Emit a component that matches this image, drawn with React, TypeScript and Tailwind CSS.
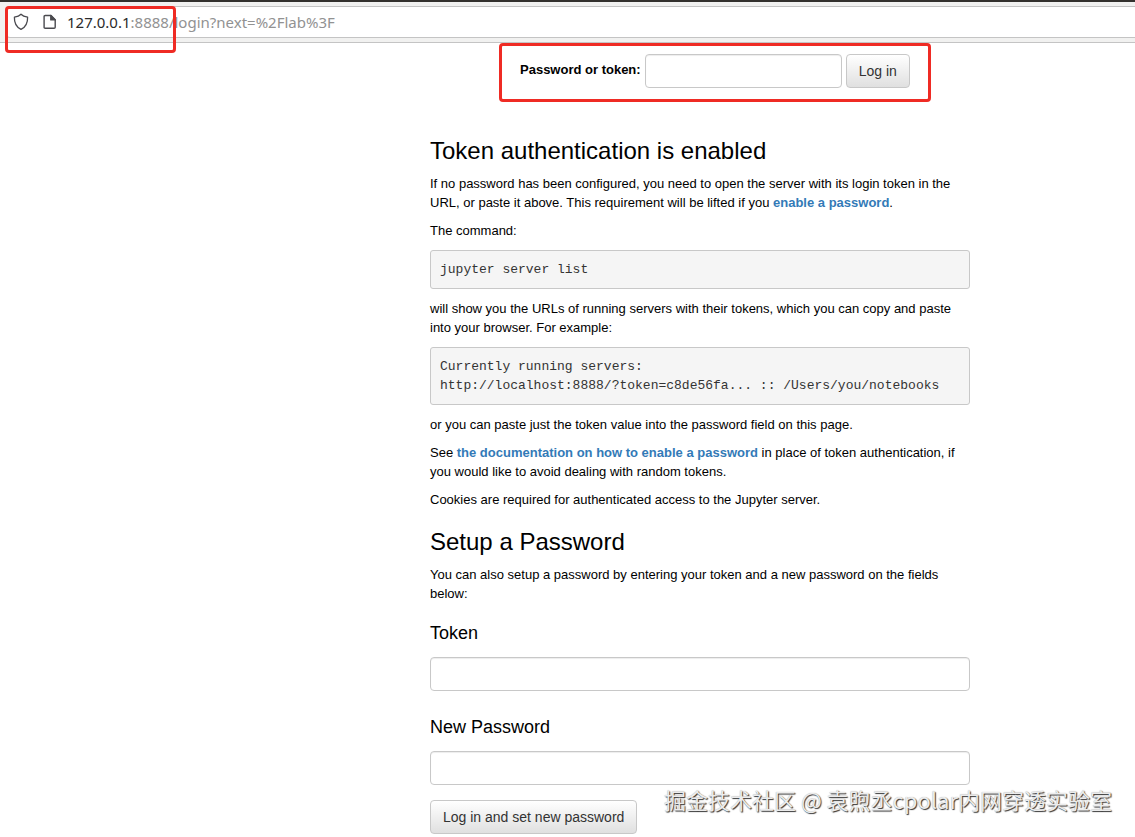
import { type ReactNode } from 'react'

const textInputClass =
  'h-[34px] rounded-[4px] border border-[#c8c8c8] bg-white px-3 text-[13px] shadow-[inset_0_1px_1px_rgba(0,0,0,0.075)] outline-none'
const buttonClass =
  'h-[34px] cursor-pointer rounded-[4px] border border-[#c8c8c8] bg-linear-to-b from-white to-[#e0e0e0] px-3 text-[14px] leading-5 text-[#333]'
const linkClass = 'font-bold text-[#337ab7] hover:underline'
const markerClass =
  'pointer-events-none absolute rounded-[4px] border-[3px] border-[#ef2b24]'

function ShieldIcon() {
  return (
    <svg width="16" height="18" viewBox="0 0 16 18" fill="none" stroke="#4a4a4f" strokeWidth="1.3" strokeLinejoin="round" aria-hidden="true">
      <path d="M8 1.2C6.6 2.6 4.3 3.6 1.4 4.2C1.2 9.8 3.2 14 8 16.4C12.8 14 14.8 9.8 14.6 4.2C11.7 3.6 9.4 2.6 8 1.2Z" />
    </svg>
  )
}

function PageIcon() {
  return (
    <svg width="14" height="16" viewBox="0 0 14 16" fill="none" stroke="#4a4a4f" strokeWidth="1.4" strokeLinejoin="round" aria-hidden="true">
      <path d="M2.2 1.5H8L12.2 5.7V13.2C12.2 13.9 11.8 14.3 11.1 14.3H2.2C1.5 14.3 1.1 13.9 1.1 13.2V2.6C1.1 1.9 1.5 1.5 2.2 1.5Z" />
      <path d="M7.8 1.5V5.9H12.2Z" fill="#4a4a4f" />
    </svg>
  )
}

function AddressBar() {
  return (
    <header className="border-t-2 border-b border-t-[#33312e] border-b-[#c4c4c4] bg-[#f1f1f0] pt-1 pb-1 pl-[6px]">
      <div className="flex h-8 items-center rounded-l-[4px] border border-r-0 border-[#c4c4c4] bg-white pl-[6px]">
        <ShieldIcon />
        <span className="ml-[14px]">
          <PageIcon />
        </span>
        <span className="ml-[10px] font-['Noto_Sans',sans-serif] text-[15px] leading-5 text-[#929292]">
          <span className="text-[#2b2b2b]">127.0.0.1</span>:8888/login?next=%2Flab%3F
        </span>
      </div>
    </header>
  )
}

function CodeBlock({ children }: { children: ReactNode }) {
  return (
    <pre className="my-[10px] rounded-[3px] border border-[#c8c8c8] bg-[#f5f5f5] px-[9px] py-[9px] font-['Liberation_Mono',monospace] text-[13px] leading-[19px] text-[#333]">
      {children}
    </pre>
  )
}

function LoginForm() {
  return (
    <form className="ml-[90px] flex gap-1 pt-[11px]" onSubmit={(e) => e.preventDefault()}>
      <label htmlFor="password_input" className="pt-[6px] font-bold whitespace-nowrap">
        Password or token:
      </label>
      <input id="password_input" type="password" className={`${textInputClass} w-[197px]`} />
      <button type="submit" className={buttonClass}>
        Log in
      </button>
    </form>
  )
}

function SetupForm() {
  return (
    <form className="flex flex-col items-start" onSubmit={(e) => e.preventDefault()}>
      <label htmlFor="token_input" className="mt-5 text-[18px] leading-5">
        Token
      </label>
      <input id="token_input" type="password" className={`${textInputClass} mt-[14px] w-full`} />
      <label htmlFor="new_password_input" className="mt-[26px] text-[18px] leading-5">
        New Password
      </label>
      <input id="new_password_input" type="password" className={`${textInputClass} mt-[14px] w-full`} />
      <button type="submit" className={`${buttonClass} mt-[15px]`}>
        Log in and set new password
      </button>
    </form>
  )
}

export default function App() {
  return (
    <div className="relative overflow-hidden bg-white pb-[3px] font-['Liberation_Sans',sans-serif] text-[13px] leading-[19px] text-black">
      <AddressBar />
      <main className="ml-[430px] max-w-[540px]">
        <LoginForm />
        <h1 className="mt-[50px] text-[24px] leading-[26px]">Token authentication is enabled</h1>
        <p className="mt-[10px]">
          If no password has been configured, you need to open the server with its login token in the
          URL, or paste it above. This requirement will be lifted if you{' '}
          <a href="#enable" className={linkClass}>enable a password</a>.
        </p>
        <p className="mt-[9px]">The command:</p>
        <CodeBlock>jupyter server list</CodeBlock>
        <p>
          will show you the URLs of running servers with their tokens, which you can copy and paste
          into your browser. For example:
        </p>
        <CodeBlock>
          {'Currently running servers:\nhttp://localhost:8888/?token=c8de56fa... :: /Users/you/notebooks'}
        </CodeBlock>
        <p>or you can paste just the token value into the password field on this page.</p>
        <p className="mt-[9px]">
          See <a href="#docs" className={linkClass}>the documentation on how to enable a password</a>{' '}
          in place of token authentication, if you would like to avoid dealing with random tokens.
        </p>
        <p className="mt-[9px]">Cookies are required for authenticated access to the Jupyter server.</p>
        <h1 className="mt-5 text-[24px] leading-[26px]">Setup a Password</h1>
        <p className="mt-[10px]">
          You can also setup a password by entering your token and a new password on the fields below:
        </p>
        <SetupForm />
      </main>

      {/* red callouts */}
      <div className={`${markerClass} top-[6px] left-[5px] h-[47px] w-[171px]`} />
      <div className={`${markerClass} top-[43px] left-[499px] h-[59px] w-[432px]`} />

      <div className="absolute right-[23px] bottom-[22px] font-['Noto_Sans_CJK_SC',sans-serif] text-[22px] leading-8 whitespace-nowrap text-[#ececec] [text-shadow:1px_1px_1px_#333,0_0_1px_#aaa]">
        掘金技术社区 @ 袁煦丞cpolar内网穿透实验室
      </div>
    </div>
  )
}
